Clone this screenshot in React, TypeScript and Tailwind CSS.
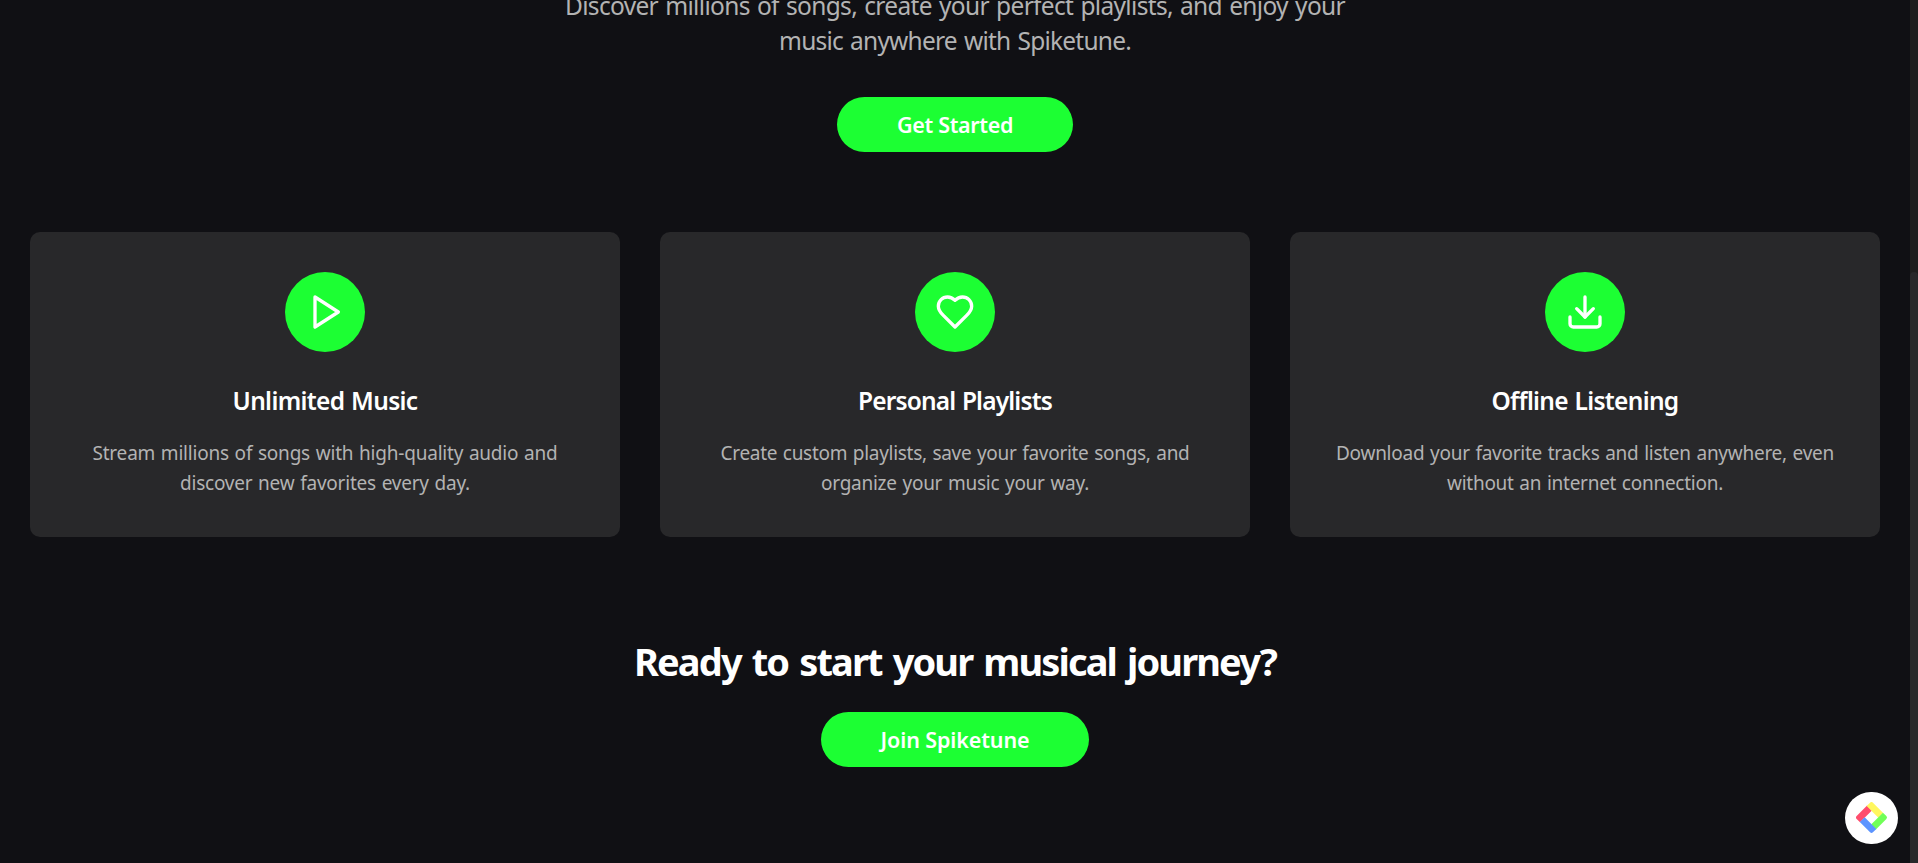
import React from "react";

type TextProps = { width: number; children: string; className?: string };

/* A single line whose glyphs are spread over a fixed measure. */
function Line({ width, children, className = "" }: TextProps) {
  const ref = React.useRef<HTMLSpanElement>(null);
  const [spacing, setSpacing] = React.useState(0);
  React.useLayoutEffect(() => {
    const el = ref.current;
    if (!el) return;
    el.style.letterSpacing = "0px";
    const natural = el.getBoundingClientRect().width;
    const next = (width - natural) / children.length;
    el.style.letterSpacing = `${next}px`;
    setSpacing(next);
  }, [width, children]);
  return (
    <span className="block">
      <span ref={ref} className={`inline-block whitespace-nowrap ${className}`} style={{ letterSpacing: `${spacing}px` }}>
        {children}
      </span>
    </span>
  );
}

const iconProps = {
  viewBox: "0 0 24 24",
  fill: "none",
  stroke: "currentColor",
  strokeWidth: 2,
  strokeLinecap: "round" as const,
  strokeLinejoin: "round" as const,
  className: "size-10",
};

const features = [
  {
    icon: (
      <svg {...iconProps}>
        <polygon points="6 3 20 12 6 21 6 3" />
      </svg>
    ),
    title: "Unlimited Music",
    titleWidth: 185,
    lines: [
      { text: "Stream millions of songs with high-quality audio and", width: 465 },
      { text: "discover new favorites every day.", width: 290 },
    ],
  },
  {
    icon: (
      <svg {...iconProps}>
        <path d="M19 14c1.49-1.46 3-3.21 3-5.5A5.5 5.5 0 0 0 16.5 3c-1.76 0-3 .5-4.5 2-1.5-1.5-2.74-2-4.5-2A5.5 5.5 0 0 0 2 8.5c0 2.3 1.5 4.05 3 5.5l7 7Z" />
      </svg>
    ),
    title: "Personal Playlists",
    titleWidth: 194,
    lines: [
      { text: "Create custom playlists, save your favorite songs, and", width: 469 },
      { text: "organize your music your way.", width: 268 },
    ],
  },
  {
    icon: (
      <svg {...iconProps}>
        <path d="M21 15v4a2 2 0 0 1-2 2H5a2 2 0 0 1-2-2v-4" />
        <polyline points="7 10 12 15 17 10" />
        <line x1="12" x2="12" y1="15" y2="3" />
      </svg>
    ),
    title: "Offline Listening",
    titleWidth: 187,
    lines: [
      { text: "Download your favorite tracks and listen anywhere, even", width: 498 },
      { text: "without an internet connection.", width: 276 },
    ],
  },
];

export default function App() {
  return (
    <div className="flex h-[863px] overflow-hidden bg-[#101014] font-['Noto_Sans','Open_Sans',sans-serif] text-white">
      <main className="flex w-[1910px] flex-col">
        <section className="flex flex-col items-center pb-20 text-center">
          <p className="-mt-[12px] text-[24.5px] leading-[35px] text-[#b3b3b3] [word-spacing:1.5px]">
            <Line width={780}>Discover millions of songs, create your perfect playlists, and enjoy your</Line>
            <Line width={352}>music anywhere with Spiketune.</Line>
          </p>
          <button className="mt-[39px] h-[55px] w-[236px] rounded-full bg-[#1cff33] pt-px text-[21.5px] leading-[54px] font-semibold">
            <Line width={116}>Get Started</Line>
          </button>
        </section>

        <section className="grid grid-cols-3 gap-10 px-[30px]">
          {features.map((f) => (
            <article key={f.title} className="h-[305px] rounded-[10px] bg-[#28282a] pt-10 text-center">
              <div className="mx-auto flex size-20 items-center justify-center rounded-full bg-[#1cff33]">{f.icon}</div>
              <h3 className="mt-[30px] text-[24.5px] leading-[38px] font-semibold [word-spacing:1px]">
                <Line width={f.titleWidth}>{f.title}</Line>
              </h3>
              <p className="mt-[18px] text-[19px] leading-[30px] text-[#b3b3b3] [word-spacing:1px]">
                {f.lines.map((l) => (
                  <Line key={l.text} width={l.width}>{l.text}</Line>
                ))}
              </p>
            </article>
          ))}
        </section>

        <section className="flex flex-col items-center pt-[99px] text-center">
          <h2 className="text-[38px] leading-[50px] font-bold [word-spacing:3px]">
            <Line width={642}>Ready to start your musical journey?</Line>
          </h2>
          <button className="mt-[26px] h-[55px] w-[268px] rounded-full bg-[#1cff33] pt-px text-[21.5px] leading-[54px] font-semibold">
            <Line width={149}>Join Spiketune</Line>
          </button>
        </section>
      </main>

      <div className="w-2 bg-[#1e1e1e] pt-[272px]">
        <div className="h-[700px] rounded bg-[#28282a]" />
      </div>

      <button aria-label="Tools" className="absolute top-[792px] left-[1845px] flex h-[52px] w-[53px] items-center justify-center rounded-full bg-white">
        <svg viewBox="-15.5 -15.5 32 32" className="size-8">
          <g transform="rotate(45)">
            <path d="M-11.5-5.3h6.8v16.8h-4.8a2 2 0 0 1-2-2z" fill="#ff4d6d" />
            <path d="M-11.5-5.3v-4.2a2 2 0 0 1 2-2H5v6.8h-16.5z" fill="#fff75e" />
            <path d="M4.7-11.5h4.8a2 2 0 0 1 2 2V5.3H4.7z" fill="#70ff57" />
            <path d="M11.5 5v4.5a2 2 0 0 1-2 2H-5V4.7h16.5z" fill="#5c94ff" />
          </g>
        </svg>
      </button>
    </div>
  );
}
